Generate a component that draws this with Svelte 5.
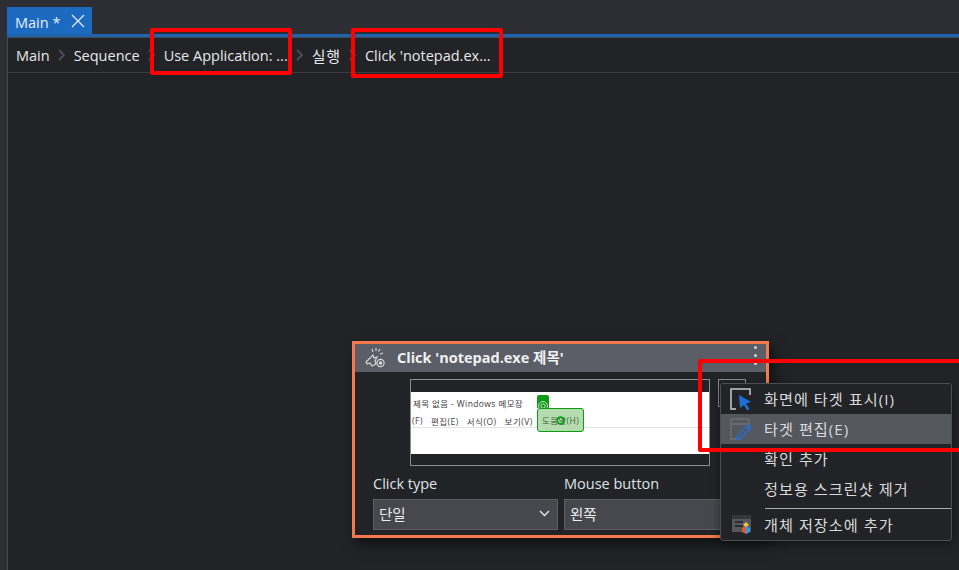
<script>
  const crumbs = ['Main', 'Sequence', 'Use Application: ...', '실행', "Click 'notepad.ex..."];
</script>

<div class="app">
  <div class="tabstrip">
    <div class="tab">
      <span class="tab-label">Main *</span>
      <svg width="14" height="14" viewBox="0 0 14 14"><path d="M1 1 13 13M13 1 1 13" stroke="#dfe6f0" stroke-width="1.4" fill="none"/></svg>
    </div>
  </div>
  <div class="main">
    <div class="crumbs">
      {#each crumbs as c, i}
        {#if i > 0}
          <svg class="sep" width="7" height="12" viewBox="0 0 7 12"><path d="M1 1l5 5-5 5" stroke="#4d4f54" stroke-width="1.8" fill="none"/></svg>
        {/if}
        <span class="crumb" class:ko={i === 3}>{c}</span>
      {/each}
    </div>

    <div class="canvas">
      <div class="node">
        <div class="node-head">
          <svg class="node-icon" width="22" height="22" viewBox="0 0 22 22" fill="none" stroke="#d5d7da" stroke-width="1.2">
            <path d="M2 16 9 9l1 3 3-1-2 4 1 3-4 2-2-3-3 1z"/>
            <circle cx="16.5" cy="17" r="3.6"/><circle cx="16.5" cy="17" r="1.2" fill="#d5d7da"/>
            <path d="M12 2v3M16 3l-1.500 2.500M19 7l-3 1M8 3l1 3"/>
          </svg>
          <span class="node-title">Click 'notepad.exe 제목'</span>
          <div class="dots"><i></i><i></i><i></i></div>
        </div>
        <div class="node-body">
          <div class="shot-row">
            <div class="shot">
              <div class="shot-white">
                <div class="shot-title">제목 없음 - Windows 메모장</div>
                <div class="shot-menu">
                  <span>(F)</span><span>편집(E)</span><span>서식(O)</span><span>보기(V)</span>
                </div>
                <div class="anchor">
                  <svg width="12" height="12" viewBox="0 0 12 12" fill="none" stroke="#bfe6bf" stroke-width="1"><circle cx="6" cy="6" r="4.500"/><circle cx="6" cy="6" r="2.200"/></svg>
                </div>
                <div class="hit">
                  <span>도움말(H)</span>
                  <svg class="hit-mark" width="11" height="11" viewBox="0 0 11 11" fill="none" stroke="#0d9a17" stroke-width="1.800"><circle cx="5.500" cy="5.500" r="3.300"/></svg>
                </div>
              </div>
            </div>
            <div class="shot-btn"></div>
          </div>
          <div class="fields">
            <div class="field one">
              <div class="label">Click type</div>
              <div class="select">
                <span>단일</span>
                <svg width="11" height="7" viewBox="0 0 11 7"><path d="M1 1l4.500 4.500L10 1" stroke="#e6e7e8" stroke-width="1.400" fill="none"/></svg>
              </div>
            </div>
            <div class="field two">
              <div class="label">Mouse button</div>
              <div class="select"><span>왼쪽</span></div>
            </div>
          </div>
        </div>
      </div>

      <div class="menu">
        <div class="item">
          <svg class="mi" width="24" height="24" viewBox="0 0 24 24" fill="none">
            <path d="M7 22H2V2h19v6" stroke="#c9cbce" stroke-width="1.500"/>
            <path d="M10 8l12 7-5 1.500 3.500 5.500-2.500 1.500-3-5.500-4 3z" fill="#1a70d8"/>
          </svg>
          <span>화면에 타겟 표시(I)</span>
        </div>
        <div class="item hot">
          <svg class="mi" width="24" height="24" viewBox="0 0 24 24" fill="none">
            <path d="M12 22H2V2h18v10M2 7h18" stroke="#6f7177" stroke-width="1.300"/>
            <path d="M8 22l1-4L19 8l3 2.500L12 21z" stroke="#1a70d8" stroke-width="1.400"/>
          </svg>
          <span>타겟 편집(E)</span>
        </div>
        <div class="item"><span>확인 추가</span></div>
        <div class="item"><span>정보용 스크린샷 제거</span></div>
        <div class="rule"></div>
        <div class="item last">
          <svg class="mi" width="24" height="24" viewBox="0 0 24 24">
            <path d="M3 3h19v17H3z" fill="#55575c"/>
            <path d="M3 3h19v4H3z" fill="#34363a"/>
            <path d="M6 10h8M6 14h8" stroke="#1f2023" stroke-width="1.500"/>
            <path d="M13 16l4-2 0 8-4-2z" fill="#e4562f"/>
            <path d="M17 14l4 2v4l-4 2z" fill="#2f9be0"/>
            <path d="M14 13l3-3 3 3-3 2z" fill="#f2c744"/>
          </svg>
          <span>개체 저장소에 추가</span>
        </div>
      </div>

      <div class="mark m1"></div>
      <div class="mark m2"></div>
      <div class="mark m3"></div>
    </div>
  </div>
</div>

<style>
  :global(body) {
    margin: 0;
    background: #2d2e33;
  }
  .app {
    width: 959px;
    height: 570px;
    box-sizing: border-box;
    padding-left: 7px;
    overflow: hidden;
    display: flex;
    flex-direction: column;
    background: #2d2e33;
    font-family: "Open Sans", "Noto Sans CJK KR", sans-serif;
    color: #e6e8ea;
    position: relative;
  }
  .tabstrip {
    height: 27px;
    padding-top: 7px;
    flex: none;
    border-bottom: 3px solid #1f62ad;
  }
  .tab {
    width: 85px;
    height: 27px;
    box-sizing: border-box;
    background: #1b6ac0;
    display: flex;
    align-items: center;
    padding-left: 8px;
    gap: 11px;
    font-size: 14.500px;
    color: #e8eef6;
  }
  .tab-label { padding-top: 3px; }
  .main {
    flex: 1;
    display: flex;
    flex-direction: column;
    border-left: 1px solid #47484d;
    background: #222326;
    min-height: 0;
  }
  .crumbs {
    height: 34px;
    box-sizing: content-box;
    flex: none;
    border-top: 1px solid #47484d;
    border-bottom: 1px solid #3c3d41;
    display: flex;
    align-items: center;
    padding-left: 8px;
    font-size: 14.500px;
  }
  .crumb {
    white-space: nowrap;
    padding-top: 1px;
  }
  .crumb.ko {
    font-size: 15px;
    letter-spacing: 0.800px;
  }
  .sep { margin: 0 9px 0 8px; flex: none; }
  .canvas {
    flex: 1;
    position: relative;
  }
  .node {
    position: absolute;
    left: 344px;
    top: 268px;
    width: 417px;
    height: 197px;
    box-sizing: border-box;
    border: 3px solid #f5794c;
    background: #222326;
    box-shadow: 4px 6px 12px rgba(0, 0, 0, 0.55);
    display: flex;
    flex-direction: column;
  }
  .node-head {
    height: 28px;
    box-sizing: border-box;
    padding: 0 0 3px 9px;
    flex: none;
    background: #5c5e67;
    display: flex;
    align-items: center;
    position: relative;
  }
  .node-icon { flex: none; }
  .node-title {
    margin-left: 11px;
    font-weight: 700;
    font-size: 14.500px;
    color: #f0f1f2;
    white-space: nowrap;
  }
  .dots {
    position: absolute;
    right: 9px;
    top: 2px;
    display: flex;
    flex-direction: column;
    gap: 5px;
  }
  .dots i {
    width: 3px;
    height: 3px;
    border-radius: 50%;
    background: #d5d6d8;
  }
  .node-body {
    flex: 1;
    position: relative;
    padding: 7px 0 0 55px;
  }
  .shot-row {
    display: flex;
    gap: 8px;
    align-items: flex-start;
  }
  .shot {
    width: 300px;
    height: 87px;
    box-sizing: border-box;
    border: 1px solid #8c8d90;
    padding-top: 12px;
  }
  .shot-white {
    height: 62px;
    background: #fff;
    position: relative;
    color: #333;
    overflow: hidden;
  }
  .shot-title {
    position: absolute;
    left: 2px;
    top: 5px;
    font-size: 8.500px;
    letter-spacing: 0.400px;
    white-space: nowrap;
    color: #3a3a3a;
  }
  .shot-menu {
    position: absolute;
    left: 1px;
    top: 23px;
    width: 298px;
    height: 12px;
    display: flex;
    gap: 8px;
    font-size: 8.500px;
    letter-spacing: 0.500px;
    white-space: nowrap;
    color: #444;
    border-bottom: 1px solid #e4e4e4;
  }
  .anchor {
    position: absolute;
    left: 126px;
    top: 3px;
    width: 12px;
    height: 13px;
    background: #0d9a17;
    border-radius: 2px 2px 0 0;
  }
  .hit {
    position: absolute;
    left: 126px;
    top: 16px;
    width: 47px;
    height: 24px;
    box-sizing: border-box;
    border: 1px solid #0d9a17;
    border-radius: 3px;
    background: #b5dcae;
    font-size: 8.500px;
    letter-spacing: 0.400px;
    color: #3f5f3f;
    display: flex;
    align-items: center;
    justify-content: center;
    white-space: nowrap;
  }
  .hit-mark {
    position: absolute;
    left: 17px;
    top: 6px;
  }
  .shot-btn {
    width: 28px;
    height: 28px;
    box-sizing: border-box;
    border: 1px solid #8c8d90;
  }
  .fields {
    position: absolute;
    left: 18px;
    top: 102px;
    display: flex;
    gap: 6px;
  }
  .field.one { width: 185px; }
  .field.two { width: 170px; }
  .label {
    font-size: 14.500px;
    line-height: 20px;
    color: #dfe3e8;
    margin-bottom: 5px;
    white-space: nowrap;
  }
  .select {
    height: 31px;
    box-sizing: border-box;
    background: #46484e;
    border: 1px solid #5c5e64;
    display: flex;
    align-items: center;
    justify-content: space-between;
    padding: 0 7px 2px 5px;
    font-size: 14.500px;
    color: #eceeef;
  }
  .menu {
    position: absolute;
    left: 712px;
    top: 310px;
    width: 232px;
    height: 158px;
    box-sizing: border-box;
    background: #222326;
    border: 1px solid #4b4d52;
    border-radius: 3px;
    box-shadow: 0 3px 10px rgba(0, 0, 0, 0.4);
    font-size: 15.200px;
    letter-spacing: 1px;
    color: #d8dadc;
  }
  .item {
    height: 30px;
    box-sizing: border-box;
    display: flex;
    align-items: center;
    padding-left: 43px;
    padding-bottom: 2px;
    position: relative;
    white-space: nowrap;
  }
  .item.hot { background: #55575e; }
  .mi {
    position: absolute;
    left: 8px;
    top: 3px;
  }
  .rule {
    height: 1px;
    margin: 4px 0 0 44px;
    background: #a9abae;
  }
  .item.last { height: 32px; }
  .mark {
    position: absolute;
    box-sizing: border-box;
    border: 4px solid #ff0000;
    border-radius: 2px;
    pointer-events: none;
  }
  .m1 { left: 142px; top: -45px; width: 142px; height: 47px; }
  .m2 { left: 343px; top: -45px; width: 152px; height: 50px; }
  .m3 { left: 690px; top: 286px; width: 270px; height: 93px; }
</style>
